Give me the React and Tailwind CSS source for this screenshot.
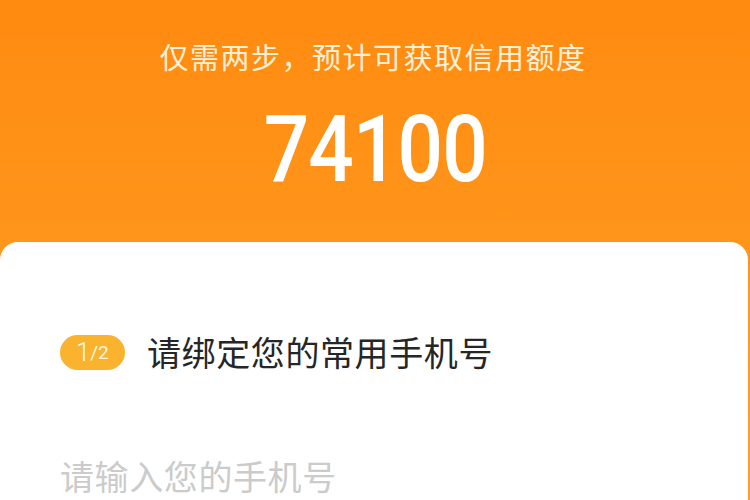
export default function App() {
	return (
		<div
			className="w-[750px] h-[500px] overflow-hidden bg-gradient-to-b from-[#ff8b10] to-[#ffa024]"
			style={{ fontFamily: '"Noto Sans CJK SC", "Noto Sans", sans-serif' }}
		>
			{/* Header */}
			<div className="h-[242px] flex flex-col items-center pt-[36px]">
				<p className="text-[29px] leading-[40px] text-[#fff1d9] tracking-[1.5px] pr-[4px]">
					仅需两步，预计可获取信用额度
				</p>
				<p
					className="mt-[24px] text-[92px] leading-[100px] font-medium text-white scale-x-[0.87] tracking-[-1px]"
					style={{ fontFamily: "Roboto, sans-serif" }}
				>
					74100
				</p>
			</div>

			{/* Card */}
			<div className="w-[748px] h-[300px] bg-white rounded-t-[18px] px-[60px]">
				<div className="pt-[92px] flex items-center gap-[22px]">
					<span
						className="w-[65px] h-[35px] rounded-full bg-[#f9b32e] text-white flex items-center justify-center leading-none"
						style={{ fontFamily: "Roboto, sans-serif" }}
					>
						<span className="text-[25px] font-light">1</span>
						<span className="text-[19px] opacity-90">/2</span>
					</span>
					<span className="text-[34px] leading-[36px] text-[#262626] tracking-[0.6px]">
						请绑定您的常用手机号
					</span>
				</div>
				<div className="mt-[86px]">
					<input
						type="tel"
						placeholder="请输入您的手机号"
						className="w-full text-[34px] tracking-[0.6px] leading-[40px] h-[40px] outline-none placeholder:text-[#cbcbcb] text-[#333]"
					/>
				</div>
			</div>
		</div>
	);
}
